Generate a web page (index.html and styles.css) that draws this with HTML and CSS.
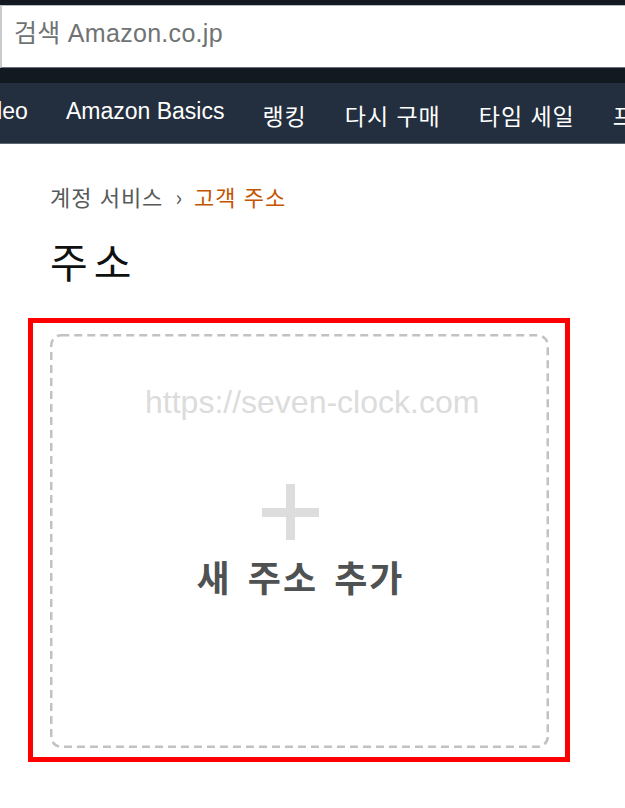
FILE: index.html
```html
<!DOCTYPE html>
<html lang="ko">
<head>
<meta charset="utf-8">
<title>주소</title>
<link rel="stylesheet" href="styles.css">
</head>
<body>
<header class="header">
  <div class="search">
    <span class="search-placeholder">검색 Amazon.co.jp</span>
  </div>
</header>
<nav class="nav">
  <ul class="nav-list">
    <li class="nav-item">Prime Video</li>
    <li class="nav-item">Amazon Basics</li>
    <li class="nav-item nav-ko">랭킹</li>
    <li class="nav-item nav-ko">다시 구매</li>
    <li class="nav-item nav-ko">타임 세일</li>
    <li class="nav-item nav-ko">프라임</li>
  </ul>
</nav>
<main class="main">
  <div class="breadcrumb">
    <span class="crumb">계정 서비스</span>
    <span class="crumb-sep">›</span>
    <span class="crumb crumb-current">고객 주소</span>
  </div>
  <h1 class="title">주소</h1>
  <div class="highlight">
    <div class="add-card">
      <svg class="card-border" viewBox="0 0 499 414" width="499" height="414" aria-hidden="true">
        <rect x="1.25" y="1.25" width="496.5" height="411.5" rx="10" ry="10" fill="none" stroke="#c2c2c2" stroke-width="2.5" stroke-dasharray="8 5"/>
      </svg>
      <span class="plus"></span>
      <span class="add-label">새 주소 추가</span>
    </div>
    <span class="watermark">https://seven-clock.com</span>
  </div>
</main>
</body>
</html>
```

FILE: styles.css
```css
* { box-sizing: border-box; }

html, body {
  margin: 0;
  padding: 0;
  background: #ffffff;
  font-family: "Liberation Sans", "Noto Sans CJK KR", sans-serif;
  overflow: hidden;
}

.header {
  background: #131921;
  padding: 5px 0 15px 0;
}

.search {
  height: 63px;
  background: #ffffff;
  border-top: 1px solid #b9bcbf;
  border-left: 2px solid #c9cccf;
  border-bottom: 1px solid #6b7078;
  display: flex;
  align-items: center;
  padding-left: 12px;
}

.search-placeholder {
  font-size: 25px;
  color: #6f7373;
  padding-bottom: 11px;
  letter-spacing: 0.3px;
}

.nav {
  background: #232f3e;
  height: 61px;
  border-bottom: 1px solid #5f6872;
  overflow: hidden;
  display: flex;
  align-items: center;
  padding-top: 3px;
}

.nav-list {
  list-style: none;
  margin: 0 0 0 -97px;
  padding: 0;
  display: flex;
  gap: 38px;
  white-space: nowrap;
}

.nav-item {
  color: #ffffff;
  font-size: 23px;
}

.nav-ko {
  letter-spacing: 1px;
}

.main {
  padding: 39px 0 0 50px;
}

.breadcrumb {
  font-family: "Noto Sans CJK KR", sans-serif;
  font-size: 22px;
  line-height: 26px;
  color: #565959;
  display: flex;
  gap: 12px;
  letter-spacing: 1px;
}

.crumb-sep { letter-spacing: 0; }

.crumb-current { color: #c45500; }

.title {
  margin: 27px 0 0 0;
  font-family: "Noto Sans CJK KR", sans-serif;
  font-weight: 400;
  font-size: 41px;
  line-height: 48px;
  letter-spacing: 6px;
  color: #0f1111;
}

.highlight {
  position: relative;
  margin: 34px 0 0 -22px;
  width: 542px;
  height: 444px;
  border: 5px solid #ff0000;
  padding: 11px 16px 9px 17px;
}

.add-card {
  position: relative;
  height: 100%;
  display: flex;
  flex-direction: column;
  align-items: center;
  justify-content: center;
}

.card-border {
  position: absolute;
  left: 0;
  top: 0;
  display: block;
}

.plus {
  width: 57px;
  height: 56px;
  margin-right: 18px;
  background:
    linear-gradient(#dddddd, #dddddd) center / 9px 100% no-repeat,
    linear-gradient(#dddddd, #dddddd) center / 100% 9px no-repeat;
}

.add-label {
  margin-top: 14px;
  font-family: "Noto Sans CJK KR", sans-serif;
  font-weight: 700;
  font-size: 36px;
  line-height: 44px;
  color: #4f5252;
  letter-spacing: 2px;
  word-spacing: 4px;
  margin-left: 2px;
}

.watermark {
  position: absolute;
  left: 112px;
  top: 63px;
  font-family: "Liberation Sans", sans-serif;
  font-size: 32px;
  line-height: 1;
  color: #dcdcdc;
  white-space: nowrap;
}
```
